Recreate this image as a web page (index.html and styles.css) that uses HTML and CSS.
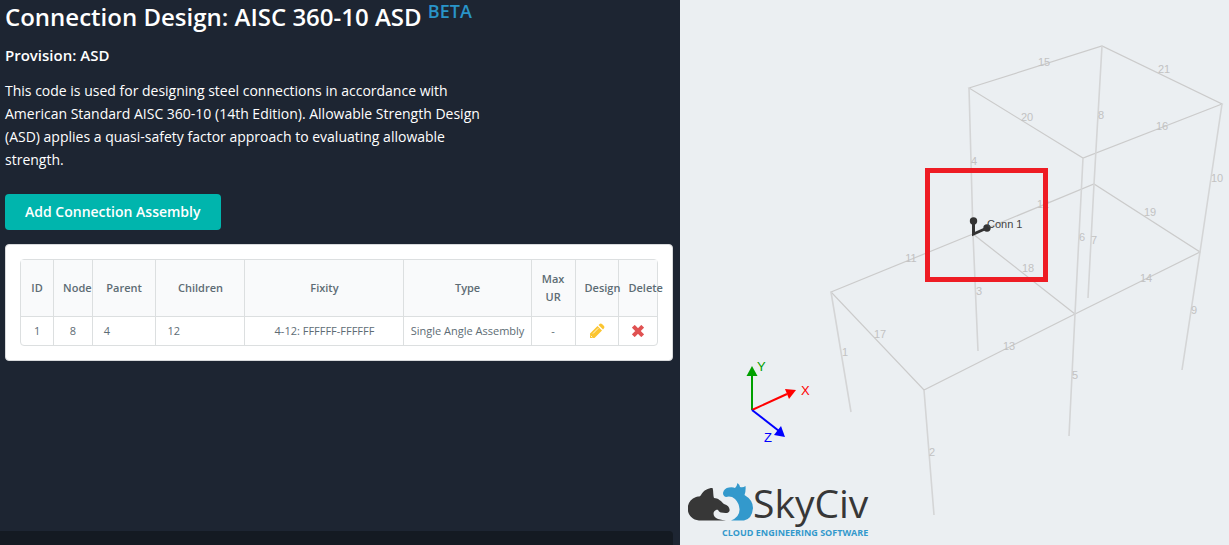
FILE: index.html
```html
<!DOCTYPE html>
<html lang="en">
<head>
<meta charset="utf-8">
<title>Connection Design</title>
<link rel="stylesheet" href="styles.css">
</head>
<body>
<div class="app">
  <main class="panel">
    <h1 class="title">Connection Design: AISC 360-10 ASD <sup class="beta">BETA</sup></h1>
    <h2 class="provision">Provision: ASD</h2>
    <p class="description">This code is used for designing steel connections in accordance with American Standard AISC 360-10 (14th Edition). Allowable Strength Design (ASD) applies a quasi-safety factor approach to evaluating allowable strength.</p>
    <button class="add-button" type="button">Add Connection Assembly</button>
    <section class="card">
      <table class="connections">
        <colgroup>
          <col class="col-id"><col class="col-node"><col class="col-parent"><col class="col-children"><col class="col-fixity"><col class="col-type"><col class="col-action"><col class="col-action"><col class="col-delete">
        </colgroup>
        <thead>
          <tr><th>ID</th><th>Node</th><th>Parent</th><th>Children</th><th>Fixity</th><th>Type</th><th>Max UR</th><th>Design</th><th>Delete</th></tr>
        </thead>
        <tbody>
          <tr>
            <td>1</td><td>8</td><td class="start">4</td><td class="start">12</td><td>4-12: FFFFFF-FFFFFF</td><td>Single Angle Assembly</td><td>-</td>
            <td><button class="icon-button" type="button" aria-label="Design"><svg viewBox="0 0 16 16" width="16" height="16"><path fill="#fbc531" d="M1 10.500 8.500 3 13 7.500 5.500 15H1zM9.500 2 11 .8Q12 .2 13 1L15 3Q15.800 4 15.200 5L14 6.500z"/><path d="M4 10.500 9.300 5.200M1.800 12.800l1.500 1.500" stroke="#fff" stroke-width=".8"/></svg></button></td>
            <td><button class="icon-button" type="button" aria-label="Delete"><svg viewBox="0 0 12 12" width="12" height="12"><path d="M2.700 2.700 9.300 9.300M9.300 2.700 2.700 9.300" stroke="#e05252" stroke-width="4" stroke-linecap="square"/></svg></button></td>
          </tr>
        </tbody>
      </table>
    </section>
    <div class="dock"></div>
  </main>
  <section class="viewer" aria-label="Model view">
    <svg class="model" viewBox="680 0 549 545" preserveAspectRatio="xMidYMin meet">
      <g class="members">
        <path d="M969 88 1102 46 1222 104 1083 158ZM831 292 973 234 1094 184 1200 252 1075 314 924 390ZM973 234 1075 314"/>
        <path class="columns" d="M831 292 851 412M924 390 934 515M969 88 973 234 978 351M1083 158 1075 314 1069 436M1102 46 1094 184 1088 298M1222 104 1200 252 1182 370"/>
      </g>
      <g class="labels">
        <text x="1044" y="66">15</text><text x="1164" y="73">21</text><text x="1027" y="121">20</text><text x="1101" y="119">8</text><text x="1162" y="130">16</text><text x="974" y="165">4</text><text x="1217" y="182">10</text><text x="1043" y="208">12</text><text x="1150" y="216">19</text><text x="1082" y="241">6</text><text x="1094" y="244">7</text><text x="911" y="262">11</text><text x="1028" y="272">18</text><text x="1146" y="282">14</text><text x="979" y="295">3</text><text x="1194" y="314">9</text><text x="880" y="338">17</text><text x="1009" y="350">13</text><text x="845" y="356">1</text><text x="1075" y="379">5</text><text x="932" y="456">2</text>
      </g>
      <g class="joint"><path d="M973.500 221V234L987 228"/><circle cx="973.500" cy="221" r="3.700"/><circle cx="987" cy="228" r="3.700"/></g>
      <text class="joint-label" x="987" y="228">Conn 1</text>
      <rect class="highlight" x="927.500" y="170.500" width="118" height="109"/>
      <g class="axes">
        <path d="M752 410V374" stroke="#00a000"/><path d="M752 366 757.500 376H746.500Z" fill="#00a000"/>
        <path d="M752 410 787 394" stroke="#f00"/><path d="M796 390 785 389 789 399Z" fill="#f00"/>
        <path d="M752 410 779 431" stroke="#00f"/><path d="M785 437 774 435 781 426Z" fill="#00f"/>
        <text x="757" y="371" fill="#00a000">Y</text><text x="801" y="395" fill="#f00">X</text><text x="764" y="442" fill="#00f">Z</text>
      </g>
    </svg>
    <div class="brand">
      <svg class="brand-mark" viewBox="0 0 65 40" width="65" height="40">
        <path fill="#373737" d="M11 37.500C-3 36-4 18 8 14 11 13 12 14 13 12 16 7 20 5 24.500 5 25.500 7 25 12 26 15 30 15 33 18 36 21 40 22 42 25 41.500 28 40 31 36 30 33 29.500 30 29 31 26 28 27 24 29 25 34 30 36 33 37 36 37 38 37.500Z"/>
        <path fill="#3399cc" d="M35 10Q36 5 41 4.500 45 4 47 5 49 3 49.500 0 52 2 52 4 55 5 57.500 3 58 8 56.500 12 65 17 65 25 64 36 56 37.500H43Q52 34 51.500 26 51 20 47 16 43 12.500 38 14 35 13 35 10Z"/>
      </svg>
      <div class="brand-text"><span class="brand-name">SkyCiv</span><span class="brand-tagline">CLOUD ENGINEERING SOFTWARE</span></div>
    </div>
  </section>
</div>
</body>
</html>
```
FILE: styles.css
```css
* {
  box-sizing: border-box;
}

body {
  margin: 0;
  font-family: "Open Sans", "Noto Sans", sans-serif;
  background: #1d2532;
}

.app {
  display: grid;
  grid-template-columns: 680fr 549fr;
  min-height: 100vh;
}

.panel {
  display: flex;
  flex-direction: column;
  align-items: flex-start;
  min-width: 0;
  padding: 0 7px 0 5px;
  color: #fff;
}

.title {
  margin: 0;
  font-size: 24px;
  font-weight: 600;
  line-height: 34px;
}

.beta {
  color: #2994c8;
  font-size: 18px;
  line-height: 0;
  vertical-align: 8px;
}

.provision {
  margin: 10px 0 12px;
  font-size: 15px;
  font-weight: 600;
  line-height: 23px;
}

.description {
  max-width: 480px;
  margin: 0 0 23px;
  font-size: 14px;
  line-height: 23px;
}

.add-button {
  height: 36px;
  margin-bottom: 14px;
  padding: 0 20px 2px;
  border: 0;
  border-radius: 4px;
  background: #00b5ad;
  color: #fff;
  font: 600 14px "Open Sans", "Noto Sans", sans-serif;
}

.card {
  width: 100%;
  padding: 14px;
  border: 1px solid #d8dadc;
  border-radius: 4px;
  background: #fff;
}

.connections {
  width: 100%;
  border: 1px solid #dcdfe0;
  border-radius: 4px;
  border-collapse: separate;
  border-spacing: 0;
  table-layout: fixed;
  color: #5d6c74;
  font-size: 11px;
  line-height: 18px;
}

.connections th {
  height: 57px;
  padding: 10px 9px;
  border-right: 1px solid #dcdfe0;
  border-bottom: 1px solid #dcdfe0;
  background: #f9fafb;
  font-weight: 600;
}

.connections td {
  height: 28px;
  padding: 5px;
  border-right: 1px solid #dcdfe0;
  text-align: center;
}

.connections th:last-child,
.connections td:last-child {
  border-right: 0;
}

.connections .start {
  padding-left: 11px;
  text-align: left;
}

.col-id { width: 5.2%; }
.col-node { width: 6.1%; }
.col-parent { width: 10%; }
.col-children { width: 14%; }
.col-fixity { width: 25%; }
.col-type { width: 20%; }
.col-action { width: 6.9%; }
.col-delete { width: 5.9%; }

.icon-button {
  display: block;
  width: 20px;
  height: 18px;
  margin: 0 auto;
  padding: 0;
  border: 0;
  background: none;
}

.icon-button svg {
  display: block;
  margin: auto;
  fill: none;
}

.dock {
  align-self: stretch;
  height: 14px;
  margin: auto 0 0 -5px;
  border-top-right-radius: 4px;
  background: #141a22;
}

.viewer {
  position: relative;
  background: #ebeff2;
}

.model {
  display: block;
  width: 100%;
}

.members {
  fill: none;
  stroke: #cbcbcb;
  stroke-width: 1.200;
}

.columns {
  stroke: #d4d5d6;
  stroke-width: 1.600;
}

.labels {
  fill: #c2c2c2;
  font: 11px "Liberation Sans", sans-serif;
  text-anchor: middle;
}

.joint {
  fill: #333;
}

.joint path {
  fill: none;
  stroke: #333;
  stroke-width: 3;
}

.joint-label {
  fill: #444;
  font: 11px "Liberation Sans", sans-serif;
}

.highlight {
  fill: none;
  stroke: #ee1c24;
  stroke-width: 5;
}

.axes {
  font: 13px "Liberation Sans", sans-serif;
  stroke-width: 2;
}

.brand {
  position: absolute;
  bottom: 6px;
  left: 8px;
  display: flex;
}

.brand-text {
  display: flex;
  flex-direction: column;
  white-space: nowrap;
}

.brand-name {
  color: #373737;
  font-size: 39px;
  line-height: 40px;
}

.brand-tagline {
  margin: 4px 0 0 -31px;
  color: #3399cc;
  font: 700 9px/12px "Open Sans", sans-serif;
}
```
